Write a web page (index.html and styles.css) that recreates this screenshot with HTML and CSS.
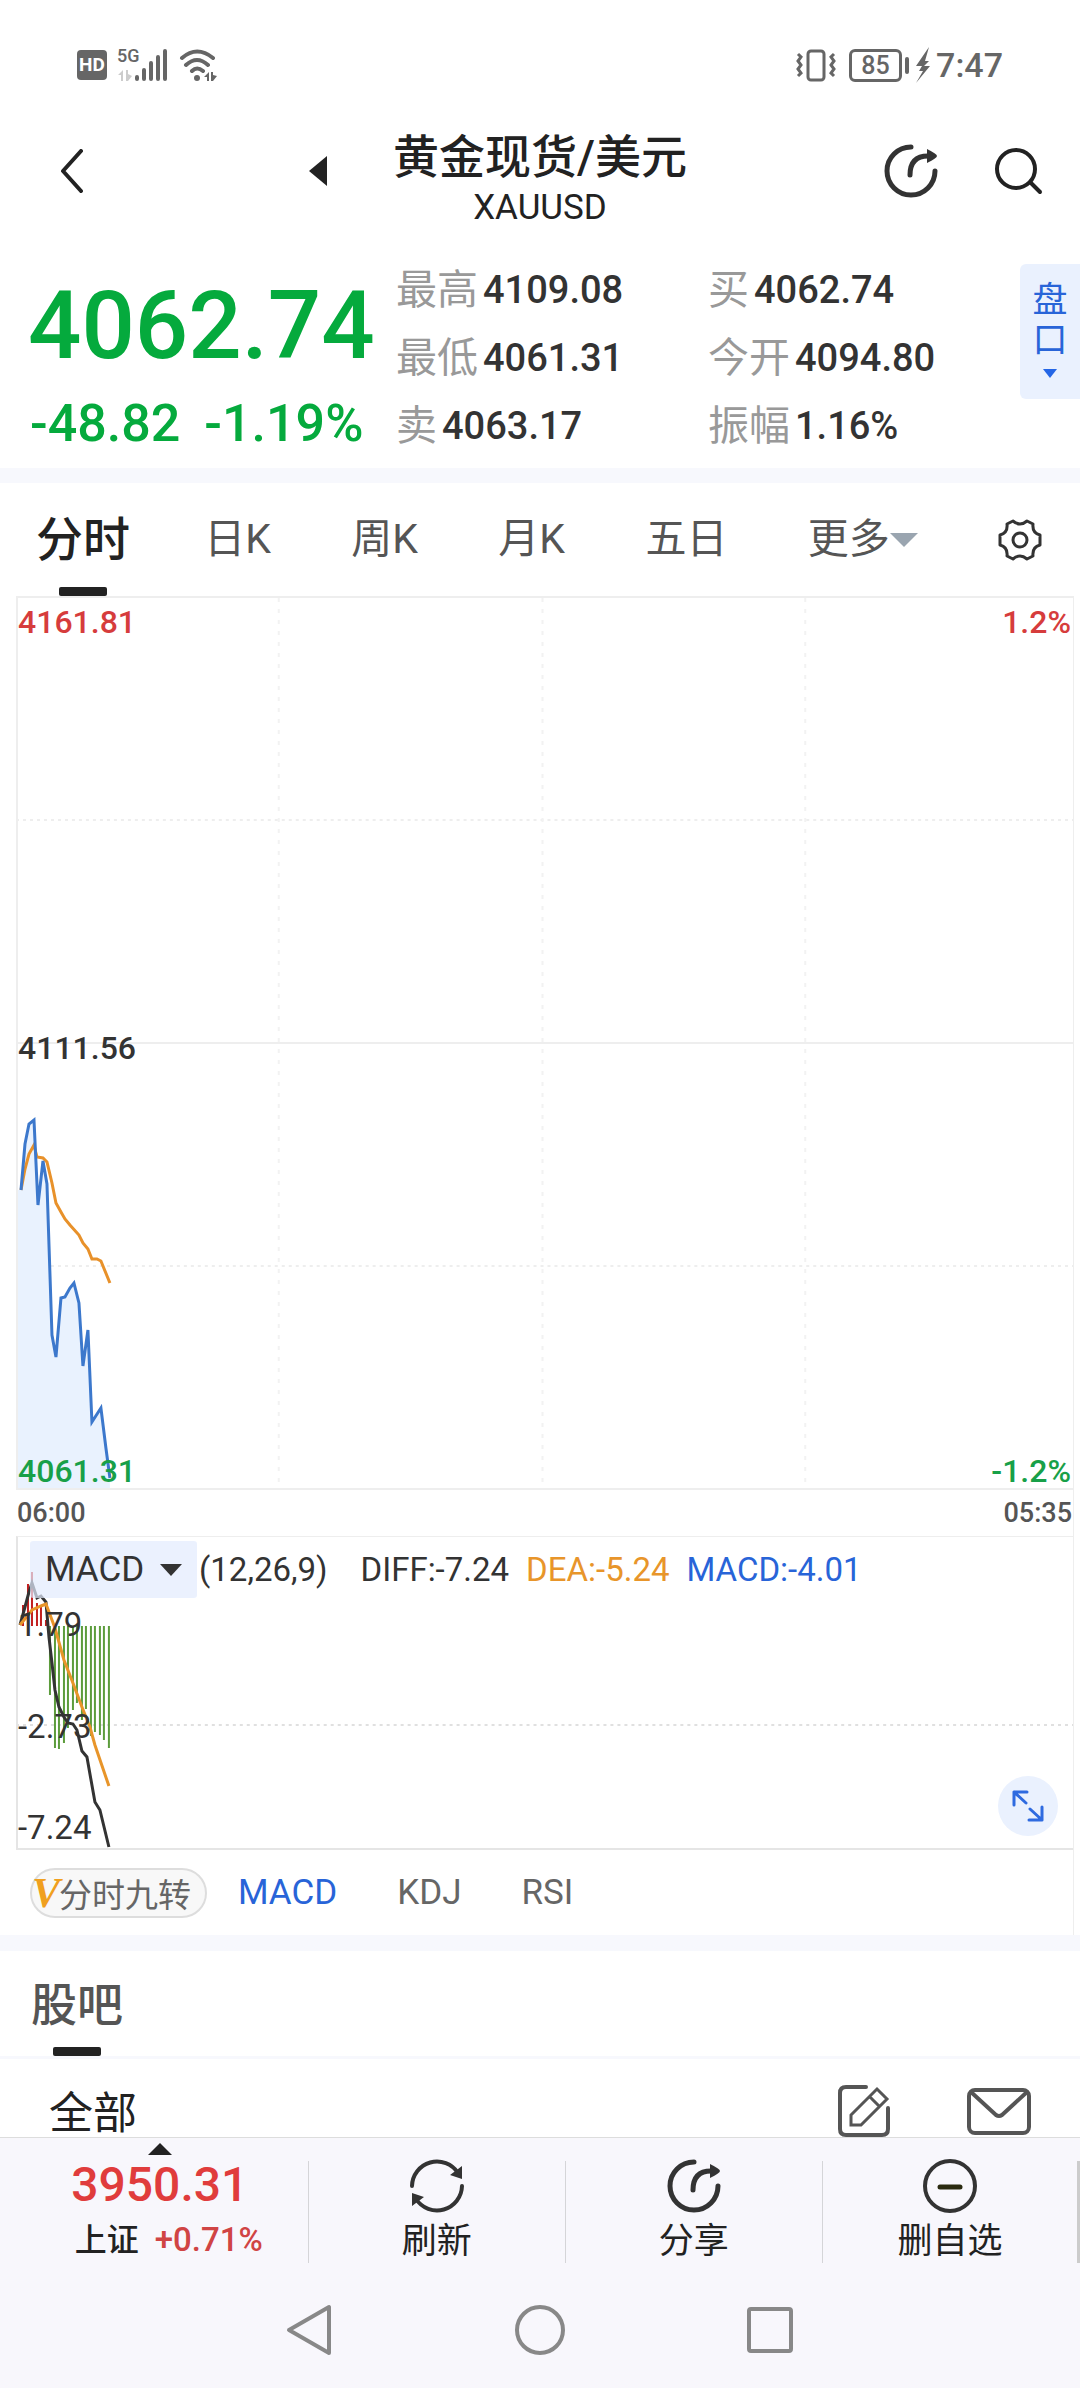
FILE: index.html
```html
<!doctype html>
<html lang="zh-CN">
<head>
	<meta charset="UTF-8">
	<meta name="viewport" content="width=device-width, initial-scale=1">
	<title>黄金现货/美元 XAUUSD</title>
	<link rel="stylesheet" href="styles.css">
</head>
<body>
	<div class="status">
		<div class="status__group">
			<span class="status__hd">HD</span>
			<span class="status__net">5G</span>
			<svg class="status__signal" width="52" height="34" viewBox="0 0 52 34">
				<path d="M0 27l5-5v11H3v-6zM8 22h2v4l4 2-4 5H8z" fill="#ccc"/>
				<path d="M19 29v2M26 22v9M33 15v16M40 9v22M47 3v28" stroke="#666" stroke-width="4" stroke-linecap="round"/>
			</svg>
			<svg width="40" height="34" viewBox="0 0 40 34" fill="none" stroke="#666" stroke-width="4" stroke-linecap="round">
				<path d="M3 10q15-13 31 0M7 17q11-10 22 0M13 23q5-5 11 0"/>
				<circle cx="18" cy="30" r="3" fill="#666" stroke="none"/>
				<path d="M25 29l5-5v9h-2v-4zM32 24h2v3l4 1-4 5h-2z" fill="#666" stroke="none"/>
			</svg>
		</div>
		<div class="status__group status__group--right">
			<svg width="40" height="34" viewBox="0 0 40 34" fill="none" stroke="#666" stroke-width="3">
				<rect x="12" y="3" width="16" height="29" rx="3"/>
				<path d="M2 6l3 3-3 4 3 4-3 4 3 4-3 3M38 6l-3 3 3 4-3 4 3 4-3 4 3 3"/>
			</svg>
			<span class="battery">85</span>
			<svg width="16" height="36" viewBox="0 0 16 36"><path d="M14 0L1 19h6L4 24h4L1 36 15 19H9l5-5h-4z" fill="#666"/></svg>
			<span class="status__time">7:47</span>
		</div>
	</div>

	<header class="header">
		<div class="header__left">
			<button class="icon-btn" aria-label="返回">
				<svg width="24" height="44" viewBox="0 0 24 44"><path d="M21 2L3 22l18 20" fill="none" stroke="#222" stroke-width="4" stroke-linecap="round" stroke-linejoin="round"/></svg>
			</button>
			<button class="icon-btn" aria-label="上一个">
				<svg width="18" height="30" viewBox="0 0 18 30"><path d="M18 0v30L0 15z" fill="#222"/></svg>
			</button>
		</div>
		<div class="header__title">
			<h1>黄金现货/美元</h1>
			<p>XAUUSD</p>
		</div>
		<div class="header__right">
			<button class="icon-btn" aria-label="分享">
				<svg width="54" height="54" viewBox="0 0 54 54"><use href="#share"/></svg>
			</button>
			<button class="icon-btn" aria-label="搜索">
				<svg width="50" height="48" viewBox="0 0 50 48" fill="none" stroke="#222" stroke-width="4" stroke-linecap="round"><circle cx="22" cy="22" r="19"/><path d="M37 36l9 9"/></svg>
			</button>
		</div>
	</header>

	<section class="quote">
		<div class="quote__price">
			<strong>4062.74</strong>
			<p><span>-48.82</span><span>-1.19%</span></p>
		</div>
		<dl class="quote__stats">
			<div><dt>最高</dt><dd>4109.08</dd></div>
			<div><dt>买</dt><dd>4062.74</dd></div>
			<div><dt>最低</dt><dd>4061.31</dd></div>
			<div><dt>今开</dt><dd>4094.80</dd></div>
			<div><dt>卖</dt><dd>4063.17</dd></div>
			<div><dt>振幅</dt><dd>1.16%</dd></div>
		</dl>
		<button class="quote__more">
			<span>盘</span><span>口</span>
			<svg width="14" height="9" viewBox="0 0 14 9"><path d="M0 0h14L7 9z" fill="#2466e6"/></svg>
		</button>
	</section>

	<nav class="tabs">
		<a class="tabs__item tabs__item--active" href="#">分时</a>
		<a class="tabs__item" href="#">日K</a>
		<a class="tabs__item" href="#">周K</a>
		<a class="tabs__item" href="#">月K</a>
		<a class="tabs__item" href="#">五日</a>
		<a class="tabs__item" href="#">更多<svg width="28" height="14" viewBox="0 0 28 14"><path d="M0 0h28L14 14z" fill="#9aa5b0"/></svg></a>
		<button class="icon-btn" aria-label="设置">
			<svg width="44" height="42" viewBox="0 0 44 42" fill="none" stroke="#333" stroke-width="3" stroke-linejoin="round">
				<path d="M15 2Q22 8 29 2L35 5Q34 14 42 16V26Q34 28 35 37L29 40Q22 34 15 40L9 37Q10 28 2 26V16Q10 14 9 5Z"/>
				<circle cx="22" cy="21" r="7"/>
			</svg>
		</button>
	</nav>

	<section class="charts">
		<div class="chart">
			<svg class="chart__plot" height="890" viewBox="2 0 1056 890" preserveAspectRatio="none" fill="none">
				<path class="grid grid--solid" d="M0 445H1058"/>
				<path class="grid" d="M0 222H1058M0 668H1058"/>
				<path class="grid grid--light" d="M263 0V890M527 0V890M790 0V890"/>
				<path d="M0 592H5L9 546 13 526 18 522 22 607 27 563 31 586 36 737 40 759 45 700 49 699 54 690 58 685 63 705 67 768 72 732 76 824 85 810 90 850 94 880V890H0z" fill="#e9f2fe"/>
				<path d="M5 592L9 571 13 556 18 547 21 559 27 560 31 564 36 585 40 605 45 614 49 621 54 627 63 637 67 645 72 651 76 661 81 661 85 663 94 685" stroke="#e8912a" stroke-width="3"/>
				<path d="M5 592L9 546 13 526 18 522 22 607 27 563 31 586 36 737 40 759 45 700 49 699 54 690 58 685 63 705 67 768 72 732 76 824 85 810 90 850 94 880" stroke="#3c78cc" stroke-width="3"/>
			</svg>
			<div class="chart__labels">
				<p class="up"><span>4161.81</span><span>1.2%</span></p>
				<p><span>4111.56</span></p>
				<p class="down"><span>4061.31</span><span>-1.2%</span></p>
			</div>
		</div>
		<div class="times"><span>06:00</span><span>05:35</span></div>

		<div class="macd">
			<svg class="chart__plot" height="311" viewBox="2 1 1056 311" preserveAspectRatio="none" fill="none">
				<path class="grid grid--dark" d="M0 189H1058"/>
				<path d="M7 69V90M12 48V90M16 36V90M21 67V90M25 70V90M30 84V90" stroke="#c22020" stroke-width="2"/>
				<path d="M34 90V159M39 90V212M43 90V213M48 90V207M52 90V192M57 90V174M61 90V167M66 90V184M70 90V173M75 90V200M79 90V196M84 90V199M88 90V204M93 90V212" stroke="#5c9c3c" stroke-width="2"/>
				<path d="M4 89L9 71 13 56 16 47 21 62 25 60 30 66 33 101 36 127 39 154 43 171 48 181 52 187 57 188 61 194 66 215 71 221 79 266 84 274 93 311" stroke="#333" stroke-width="3"/>
				<path d="M4 89L16 74 25 70 30 68 39 92 48 124 57 147 66 171 74 191 79 209 93 250" stroke="#e8952a" stroke-width="3"/>
			</svg>
			<div class="macd__labels"><span>1.79</span><span>-2.73</span><span>-7.24</span></div>
			<div class="macd__legend">
				<label class="macd__select">
					<select aria-label="指标"><option>MACD</option><option>KDJ</option><option>RSI</option></select>
					<svg width="22" height="12" viewBox="0 0 22 12"><path d="M0 0h22L11 12z" fill="#333"/></svg>
				</label>
				<span class="macd__params">(12,26,9)</span>
				<span>DIFF:-7.24</span>
				<span class="dea">DEA:-5.24</span>
				<span class="blue">MACD:-4.01</span>
			</div>
			<button class="macd__expand" aria-label="全屏">
				<svg width="32" height="32" viewBox="0 0 32 32" fill="none" stroke="#2f6be0" stroke-width="3" stroke-linecap="round" stroke-linejoin="round">
					<path d="M2 15V2h13M2 2l12 11M30 17v13H17M30 30L18 19"/>
				</svg>
			</button>
		</div>

		<div class="indicators">
			<button class="indicators__pill"><b>V</b>分时九转</button>
			<button class="blue">MACD</button>
			<button>KDJ</button>
			<button>RSI</button>
		</div>
	</section>

	<section class="forum">
		<h2 class="forum__title"><span>股吧</span></h2>
		<div class="forum__bar">
			<a href="#">全部</a>
			<button class="icon-btn" aria-label="发帖">
				<svg width="52" height="52" viewBox="0 0 52 52" fill="none" stroke="#555" stroke-width="4" stroke-linecap="round">
					<path d="M28 2H8Q2 2 2 8v36q0 6 6 6h36q6 0 6-6V23"/>
					<path d="M13 30L39 4l10 10-26 26H13zM32 12l9 9" stroke-width="3"/>
				</svg>
			</button>
			<button class="icon-btn" aria-label="消息">
				<svg width="64" height="49" viewBox="0 0 64 49" fill="none" stroke="#555" stroke-width="4" stroke-linejoin="round">
					<rect x="2" y="2" width="60" height="43" rx="6"/>
					<path d="M4 4l25 23q3 2 6 0L60 4"/>
				</svg>
			</button>
		</div>
	</section>

	<footer class="bottom">
		<div class="actions">
			<a class="index" href="#">
				<svg width="24" height="12" viewBox="0 0 24 12"><path d="M12 0l12 12H0z" fill="#222"/></svg>
				<strong>3950.31</strong>
				<span class="index__row"><b>上证</b><em>+0.71%</em></span>
			</a>
			<button>
				<svg width="54" height="56" viewBox="0 0 54 56" fill="none" stroke="#333" stroke-width="4" stroke-linecap="round">
					<path d="M2 28A25 25 0 0 1 48 15M52 28A25 25 0 0 1 6 41"/>
					<path d="M52 8v13l-12-4zM2 48V35l12 4z" fill="#333" stroke="none"/>
				</svg>
				刷新
			</button>
			<button>
				<svg width="54" height="56" viewBox="0 -1 54 56"><use href="#share" width="54" height="54"/></svg>
				分享
			</button>
			<button>
				<svg width="54" height="56" viewBox="0 0 54 56" fill="none" stroke-width="4" stroke-linecap="round">
					<circle cx="27" cy="28" r="25" stroke="#333"/>
					<path d="M17 29h20" stroke="#2a2a10" stroke-width="5"/>
				</svg>
				删自选
			</button>
		</div>
		<div class="keys">
			<button class="icon-btn" aria-label="后退"><svg width="50" height="52" viewBox="0 0 50 52"><path d="M44 3v46L4 26z"/></svg></button>
			<button class="icon-btn" aria-label="主页"><svg width="52" height="52" viewBox="0 0 52 52"><circle cx="26" cy="26" r="23"/></svg></button>
			<button class="icon-btn" aria-label="多任务"><svg width="48" height="52" viewBox="0 0 48 52"><rect x="3" y="5" width="42" height="42" rx="2"/></svg></button>
		</div>
	</footer>

	<svg width="0" height="0" class="defs">
		<symbol id="share" viewBox="0 0 54 54">
			<g fill="none" stroke="#333" stroke-width="5" stroke-linecap="round">
				<path d="M27 3A24 24 0 1 0 51 27"/>
				<path d="M26 31Q26 12 44 12"/>
			</g>
			<path d="M43 5q10 5 10 7t-10 7z" fill="#333"/>
		</symbol>
	</svg>
</body>
</html>
```

FILE: styles.css
```css
*,*:before,*:after{box-sizing:border-box;margin:0;padding:0}
body{background:#fff;color:#333;font-family:Roboto,"Noto Sans CJK SC",sans-serif;font-size:33px}
a{color:inherit;text-decoration:none}
button,select{background:none;border:0;color:inherit;font:inherit;cursor:pointer}
svg{display:block;flex:none}
.icon-btn{display:flex;align-items:center;justify-content:center}
.defs{position:absolute}
.blue{color:#2864d8}
.up{color:#d63c3c}
.down{color:#18a048}

/* status bar */
.status{display:flex;justify-content:space-between;align-items:center;height:130px;padding:0 77px;color:#666}
.status__group{position:relative;display:flex;align-items:center;gap:9px}
.status__group--right{gap:5px}
.status__hd{background:#666;color:#fff;width:30px;height:30px;border-radius:4px;font-size:19px;font-weight:700;line-height:30px;text-align:center}
.status__signal{margin-left:2px}
.status__net{position:absolute;top:-3px;left:40px;font-size:18px;font-weight:500;line-height:22px}
.battery{position:relative;width:53px;height:33px;margin:0 8px;border:3px solid #666;border-radius:6px;font-size:25px;font-weight:500;line-height:27px;text-align:center}
.battery:after{content:"";position:absolute;right:-10px;top:5px;width:4px;height:17px;border-radius:2px;background:#666}
.status__time{font-size:34px;font-weight:500}

/* header */
.header{display:grid;grid-template-columns:1fr auto 1fr;align-items:start;height:104px;color:#222}
.header__left,.header__right{display:flex;align-items:center;height:82px}
.header__left{justify-content:space-between;padding:0 66px 0 60px}
.header__right{justify-content:flex-end;gap:56px;padding-right:36px}
.header__title{padding-top:2px;text-align:center}
.header__title h1{font-size:46px;font-weight:500;line-height:50px}
.header__title p{font-size:35px;line-height:52px}

/* quote */
.quote{display:grid;grid-template-columns:33fr 52fr 60px;padding:21px 0 9px;border-bottom:15px solid #f7f8fd}
.quote__price{padding:20px 0 0 28px;color:#05aa3d}
.quote__price strong{display:block;font-size:94px;font-weight:500;line-height:102px}
.quote__price p{display:flex;gap:24px;margin-top:16px;padding-left:2px;font-size:52px;font-weight:500;line-height:62px}
.quote__stats{display:grid;grid-template-columns:1fr 1fr}
.quote__stats div{display:flex;gap:5px;line-height:70px;height:68px}
.quote__stats dt{font-size:41px;color:#999}
.quote__stats dd{font-size:38px;font-weight:500}
.quote__more{display:flex;flex-direction:column;align-items:center;align-self:start;height:135px;margin-top:9px;padding-top:17px;border-radius:6px 0 0 6px;background:#eaf1fe;color:#2864d8;font-size:35px;line-height:40px}
.quote__more svg{margin-top:8px}

/* period tabs */
.tabs{display:flex;justify-content:space-between;align-items:center;height:113px;padding:0 38px 0 36px;color:#555;font-size:41px}
.tabs__item{position:relative;display:flex;align-items:center;line-height:113px}
.tabs__item--active{color:#222;font-size:47px;font-weight:500}
.tabs__item--active:after,.forum__title span:after{content:"";position:absolute;left:50%;bottom:0;width:48px;height:9px;margin-left:-24px;border-radius:2px;background:#222}
.tabs__item--active + .tabs__item{margin-left:-6px}

/* charts */
.charts{margin:0 6px 0 16px;border-right:1px solid #eee}
.chart,.macd{position:relative;border:solid #eee;border-width:2px 0 2px 2px}
.chart__plot{width:100%}
.grid{stroke:#eee;stroke-width:2;stroke-dasharray:3 4}
.grid--solid{stroke-dasharray:none}
.grid--light{stroke:#f2f2f2;stroke-dasharray:4 7}
.grid--dark{stroke:#e0e0e0}
.chart__labels,.macd__labels{position:absolute;top:0;right:0;bottom:0;left:0;display:flex;flex-direction:column;justify-content:space-between}
.chart__labels{padding-right:2px;font-size:32px;font-weight:500;line-height:38px;padding-top:5px}
.chart__labels p{display:flex;justify-content:space-between}
.chart__labels p:last-child{line-height:34px}
.times{display:flex;justify-content:space-between;height:46px;padding:0 1px;color:#555;font-size:27px;font-weight:500;line-height:46px}
.macd{border-color:#e5e5e5;border-top:1px solid #eee}
.macd__labels{padding:68px 0 0;line-height:40px}
.macd__legend{position:absolute;top:4px;left:12px;display:flex;align-items:center;gap:17px;line-height:57px}
.macd__select{display:flex;align-items:center;height:57px;padding:0 15px 0 15px;border-radius:3px;background:rgba(226,235,253,.7)}
.macd__select select{width:115px;height:57px;font-size:35px;appearance:none;outline:0}
.macd__params{margin:0 16px 0 -15px}
.dea{color:#e8952a}
.macd__expand{position:absolute;right:15px;bottom:12px;display:flex;align-items:center;justify-content:center;width:60px;height:60px;border-radius:50%;background:#eaf1fe}

/* indicator switch */
.indicators{display:flex;align-items:center;height:85px;padding-left:14px;color:#666;font-size:35px}
.indicators button{margin-right:60px}
.indicators .indicators__pill{display:flex;align-items:center;height:50px;margin-right:31px;padding-right:14px;border:2px solid #ddd;border-radius:25px;background:#f8f8f8;font-size:33px}
.indicators__pill b{width:27px;color:#f0a020;font:italic 700 42px "Liberation Serif",serif}

/* forum */
.forum{border-top:16px solid #f7f8fd}
.forum__title{height:108px;padding-left:31px;border-bottom:3px solid #f7f8fd;color:#555;font-size:46px;font-weight:500;line-height:108px}
.forum__title span{position:relative;display:inline-block;height:105px}
.forum__bar{display:flex;align-items:flex-end;gap:77px;height:78px;padding:0 49px;color:#222;font-size:44px;line-height:46px}
.forum__bar a{margin-right:auto}

/* bottom bar */
.bottom{background:#f8f7fc;border-top:1px solid #ddd;color:#222}
.actions{display:grid;grid-template-columns:6fr 5fr 5fr 5fr;align-items:start;padding-top:23px}
.actions button,.index{display:flex;flex-direction:column;align-items:center;height:102px;border-right:1px solid #d5d5d8}
.actions button{font-size:35px;line-height:44px}
.actions button:last-child{border-right:3px solid #ccc}
.actions button svg{margin-top:-3px;margin-bottom:6px}
.index{padding-left:12px}
.index svg{margin-top:-18px}
.index strong{color:#e03c3c;font-size:48px;font-weight:500;line-height:60px}
.index__row{display:flex;align-items:center;gap:16px;margin-left:18px;font-size:32px;line-height:50px}
.index__row b{font-weight:500}
.index__row em{color:#d04444;font-size:33px;font-style:normal;font-weight:500}
.keys{display:grid;grid-template-columns:1fr 1fr 1fr;height:125px;padding:9px 18% 0;justify-items:center;align-items:center}
.keys svg{fill:none;stroke:#888;stroke-width:4;stroke-linejoin:round}
```
